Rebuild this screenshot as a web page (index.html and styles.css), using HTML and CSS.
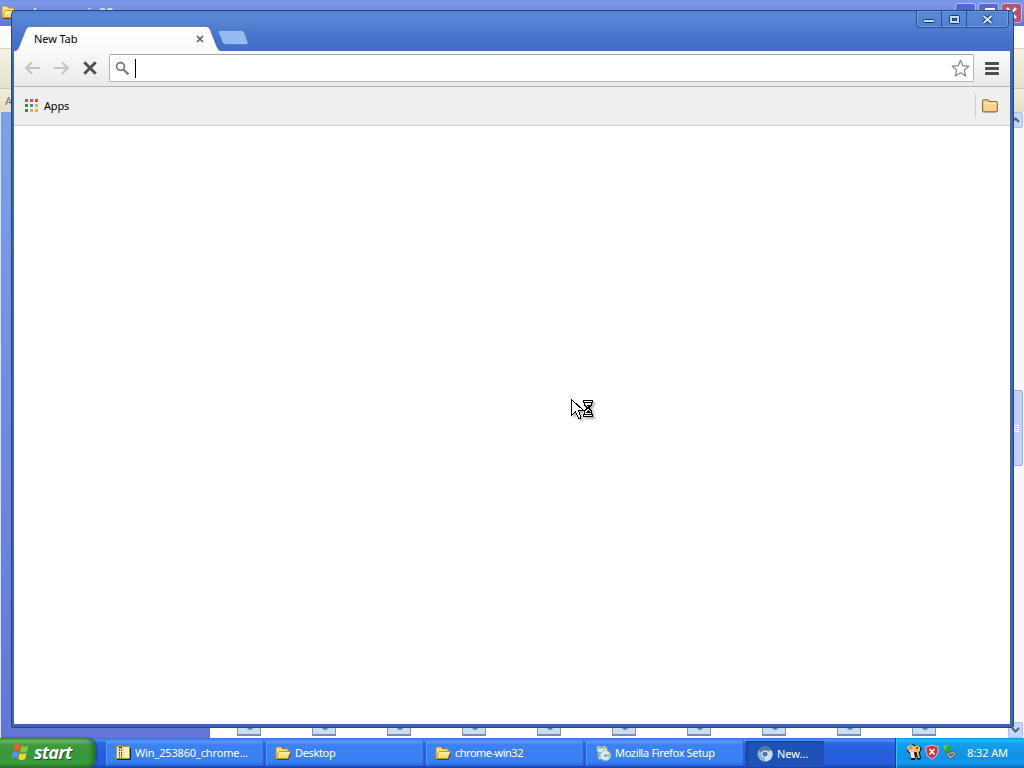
FILE: index.html
```
<!DOCTYPE html>
<html lang="en">
<head>
    <meta charset="UTF-8">
    <meta name="viewport" content="width=device-width, initial-scale=1.0">
    <title>New Tab</title>
    <link rel="stylesheet" href="styles.css">
</head>
<body>
    <svg class="defs" width="0" height="0">
        <defs>
            <linearGradient id="folder-fill" x1="0" y1="0" x2="0" y2="1">
                <stop offset="0" stop-color="#fffbb8"/>
                <stop offset="1" stop-color="#f6cf58"/>
            </linearGradient>
            <symbol id="xp-folder" viewBox="0 0 16 16">
                <path d="M1 13V3.5L2 2h4l1.500 2H13v3" fill="#fbe384" stroke="#b98d25"/>
                <path d="M1.500 13.500L4 6.500h11.500l-2.500 7z" fill="url(#folder-fill)" stroke="#c79a2c"/>
                <path d="M2 14.500h11.500l2-6" fill="none" stroke="#4b4431"/>
            </symbol>
        </defs>
    </svg>

    <div class="desktop">
        <!-- explorer window behind the browser -->
        <div class="explorer">
            <div class="explorer-title">
                <svg class="title-icon" width="16" height="16"><use href="#xp-folder"/></svg>
                <span class="title-text">chrome-win32</span>
                <div class="xp-buttons">
                    <span class="xp-btn"><svg width="20" height="20"><path d="M5 14h7" stroke="#fff" stroke-width="3"/></svg></span>
                    <span class="xp-btn"><svg width="20" height="20"><path d="M7 9V5h8v8h-3M4 9h8v7H4z" fill="none" stroke="#fff" stroke-width="2"/></svg></span>
                    <span class="xp-btn xp-close"><svg width="20" height="20"><path d="M5 4l9 10M14 4L5 14" stroke="#fff" stroke-width="2.4"/></svg></span>
                </div>
            </div>
            <div class="explorer-menu"></div>
            <div class="explorer-tools"></div>
            <div class="explorer-address">Address</div>
            <div class="explorer-body">
                <div class="side-pane"></div>
                <div class="files">
                    <i class="file"></i><i class="file"></i><i class="file"></i><i class="file"></i><i class="file"></i>
                    <i class="file"></i><i class="file"></i><i class="file"></i><i class="file"></i><i class="file"></i>
                </div>
                <div class="scrollbar">
                    <span class="scroll-btn"><svg width="15" height="15"><path d="M3 9l3.500-3.500L10 9" fill="none" stroke="#4d6185" stroke-width="2"/></svg></span>
                    <span class="scroll-thumb"><i></i><i></i><i></i><i></i></span>
                    <span class="scroll-btn"><svg width="15" height="15"><path d="M3 5l3.500 3.500L10 5" fill="none" stroke="#4d6185" stroke-width="2"/></svg></span>
                </div>
            </div>
        </div>

        <!-- browser window -->
        <div class="browser">
            <div class="window-buttons">
                <span class="win-btn win-min"><svg width="13" height="9"><rect x=".5" y="4.5" width="11" height="3" rx="1" fill="#c4dcfa" stroke="#1b3a70"/></svg></span>
                <span class="win-btn win-max"><svg width="13" height="11"><rect x="1.500" y="1.500" width="10" height="8" rx="1" fill="#c4dcfa" stroke="#1b3a70"/><rect x="4.500" y="4.500" width="4" height="2" fill="#4473c5" stroke="#1b3a70"/></svg></span>
                <span class="win-btn win-close"><svg width="13" height="11"><path d="M2.5 2l8 7M10.500 2l-8 7" stroke="#1b3a70" stroke-width="4"/><path d="M2.500 2l8 7M10.500 2l-8 7" stroke="#d0e4fc" stroke-width="2"/></svg></span>
            </div>
            <div class="tab-strip">
                <div class="tab">
                    <svg class="tab-shape" width="206" height="25">
                        <defs>
                            <linearGradient id="tab-fill" x1="0" y1="0" x2="0" y2="1">
                                <stop offset="0" stop-color="#fff"/>
                                <stop offset="1" stop-color="#fafafa"/>
                            </linearGradient>
                        </defs>
                        <path d="M0 25Q3 24 4 21L11 3Q12.500.5 15 .5H191Q194 .5 195 3L202 21Q203 24 206 25z" fill="url(#tab-fill)"/>
                        <path d="M0 24.500Q3 24 4 21L11 3Q12.500.5 15 .5H191Q194 .5 195 3L202 21Q203 24 206 24.500" fill="none" stroke="#2f569e" stroke-opacity=".55"/>
                    </svg>
                    <span class="tab-title">New Tab</span>
                    <svg class="tab-close" width="8" height="8"><path d="M1 1l6 6M7 1L1 7" stroke="#606060" stroke-width="1.7"/></svg>
                </div>
                <svg class="new-tab" width="32" height="16">
                    <path d="M3 .5H24.500Q26.500.5 27.500 2.500L31 12.500Q31.500 14.500 30 14.500H8.500Q6.500 14.500 5.500 12.500L1.500 2.500Q1 .5 3 .5z" fill="#94bcf2" stroke="#527fc8"/>
                </svg>
            </div>
            <div class="toolbar">
                <svg class="nav-icon" width="17" height="16"><path d="M16 8H3M8 2.200L2.200 8 8 13.800" fill="none" stroke="#c5c5c5" stroke-width="2.200"/></svg>
                <svg class="nav-icon" width="17" height="16"><path d="M1 8h13M9 2.200L14.800 8 9 13.800" fill="none" stroke="#c5c5c5" stroke-width="2.200"/></svg>
                <svg class="nav-icon" width="16" height="16"><path d="M2.300 2.300l11.400 11.400M13.700 2.300L2.300 13.700" stroke="#505050" stroke-width="3"/></svg>
                <div class="omnibox">
                    <svg class="search-icon" width="15" height="15"><circle cx="5.500" cy="5.500" r="3.900" fill="none" stroke="#777" stroke-width="1.700"/><path d="M8.500 8.500l5 5" stroke="#777" stroke-width="2.300"/></svg>
                    <span class="caret"></span>
                    <svg class="star" width="19" height="19"><path d="M9.500 1.200l2.300 5.500 6 .5-4.500 3.900 1.400 5.900-5.200-3.200L4.300 17l1.400-5.900L1.200 7.200l6-.5z" fill="#fff" stroke="#858585" stroke-width="1.200" stroke-linejoin="round"/></svg>
                </div>
                <div class="menu-icon"><i></i><i></i><i></i></div>
            </div>
            <div class="bookmarks">
                <div class="apps-grid">
                    <i class="red"></i><i class="red"></i><i class="red"></i>
                    <i class="green"></i><i class="blue"></i><i class="yellow"></i>
                    <i class="green"></i><i class="yellow"></i><i class="yellow"></i>
                </div>
                <span class="apps-label">Apps</span>
                <div class="other-bookmarks">
                    <svg width="16" height="14">
                        <path d="M.6 11.500V2Q.6.700 2 .700H5.500Q6.500.700 7 2.500H14Q15.300 2.500 15.300 4V11.500Q15.300 12.900 14 12.900H2Q.6 12.900.6 11.500z" fill="#fbd487" stroke="#81694a" stroke-width="1.100"/>
                        <path d="M1.500 4.200H14.500" stroke="#fff0c8"/>
                    </svg>
                </div>
            </div>
            <div class="page"></div>
        </div>

        <!-- busy pointer -->
        <svg class="cursor" width="26" height="22" shape-rendering="crispEdges">
            <path d="M.5.5V16.500L4.500 12.500L7.500 19.500H9.500V17.500L7.500 11.500H12.500z" fill="#fff" stroke="#000"/>
            <path d="M13.500 3v3l3 3-3 3v4h7v-4l-3-3 3-3V3z" fill="#fff" stroke="#000"/>
            <path d="M12.500 1.500h9v2h-9zM12.500 15.500h9v2h-9z" fill="#fff" stroke="#000"/>
            <path d="M16 6h3v1h-1v2h-1V7h-1zM17 11h1v1h1v1h1v1h-5v-1h1v-1h1z" fill="#000"/>
        </svg>

        <div class="taskbar">
            <div class="start">
                <svg class="flag" width="20" height="20">
                    <path d="M4.500 3Q7.500.8 10.500 3L9 9.200Q6 7.200 3 9.200z" fill="#ef5a2c"/>
                    <path d="M11.500 3.500Q15 5.500 18.500 3.500L17 9.700Q13.500 11.500 10 9.700z" fill="#82c63e"/>
                    <path d="M2.700 10.300Q5.700 8.300 8.700 10.300L7.200 16.500Q4.200 14.500 1.200 16.500z" fill="#5b92ee"/>
                    <path d="M9.700 10.900Q13.200 12.700 16.700 10.900L15.200 17.100Q11.700 19 8.200 17.100z" fill="#fbd133"/>
                </svg>
                <span class="start-text">start</span>
            </div>
            <div class="tasks">
                <div class="task">
                    <svg width="16" height="16"><rect x="1.500" y="1.500" width="13" height="12" fill="#f6e88c" stroke="#b39b45"/><path d="M9 3h5v9H9z" fill="#fff6b8"/><path d="M2 14.500h13.500V3" fill="none" stroke="#222"/><path d="M5.500 2v11" stroke="#333" stroke-width="3" stroke-dasharray="1.500 1"/><path d="M5.500 3v10" stroke="#ddd"/></svg>
                    <span class="task-zip">Win_253860_chrome...</span>
                </div>
                <div class="task">
                    <svg width="16" height="16"><use href="#xp-folder"/></svg>
                    <span class="task-desktop">Desktop</span>
                </div>
                <div class="task">
                    <svg width="16" height="16"><use href="#xp-folder"/></svg>
                    <span class="task-chrome">chrome-win32</span>
                </div>
                <div class="task">
                    <svg width="16" height="16"><path d="M1.500 2.500h11l-1 12h-8z" fill="#d4e8ee" stroke="#7093a9"/><path d="M2 1h4v3H2zM7 1h4v3H7z" fill="#9cc9a4"/><path d="M3 7h5v5H3z" fill="#88b6d6"/><circle cx="10.500" cy="10.500" r="5" fill="#e5e9ed" stroke="#b5c1cc"/><path d="M10.500 10.500l4-2a4 4 0 010 4z" fill="#8dcf7d"/><circle cx="10.500" cy="10.500" r="1.500" fill="#7ba0c6"/></svg>
                    <span class="task-firefox">Mozilla Firefox Setup</span>
                </div>
                <div class="task task-active">
                    <svg width="16" height="16"><circle cx="8" cy="8" r="7.500" fill="#8eb4dc"/><path d="M8 8L1.300 4.500A7.500 7.500 0 0114.700 4.500H8z" fill="#53789f"/><path d="M8 8l6.700-3.500A7.500 7.500 0 018 15.500z" fill="#cbdff2"/><circle cx="8" cy="8" r="3.600" fill="#e5f1fc"/><circle cx="8" cy="8" r="2.600" fill="#4778b3"/></svg>
                    <span class="task-new">New...</span>
                </div>
            </div>
            <div class="tray">
                <svg width="16" height="18"><path d="M3 3l4-2 3 2 4 0 2 3-2 3 1 7-3 1-2-5-1 5H5L4 11 1 8z" fill="#111"/><path d="M1 4L5 1.500 10 4 9 9 3 9z" fill="#f2c7a0"/><path d="M2 5l3-3 2 3-2 2z" fill="#d88e4a"/><path d="M4 9l4 0 1 6H5z" fill="#e9e9dc"/><circle cx="11" cy="6" r="3.300" fill="#f7c45a"/><path d="M11 7l2 8" stroke="#f3b548" stroke-width="2"/><circle cx="11" cy="5" r="1" fill="#3b2c15"/></svg>
                <svg width="14" height="16"><path d="M7 1Q9.500 2.500 13 2.500V8Q12.500 12.500 7 15.200 1.500 12.500 1 8V2.500Q4.500 2.500 7 1z" fill="#d32d3e" stroke="#e5bdcb"/><path d="M4.500 5l5 5.500M9.500 5l-5 5.500" stroke="#fff" stroke-width="1.800"/></svg>
                <svg width="16" height="16"><path d="M2 5L6 2l4 2-2 5-4 1z" fill="#33a23e"/><path d="M1 1h5L3 7z" fill="#58c94d"/><path d="M4 10l7-3 4 3-7 5z" fill="#b9c5c6" stroke="#415d66"/><path d="M6 10.500l5-2 2 1.500-5 3z" fill="#5c787b"/></svg>
                <span class="clock">8:32 AM</span>
            </div>
        </div>
    </div>
</body>
</html>
```
FILE: styles.css
```
* {
    box-sizing: border-box;
}

body {
    margin: 0;
    overflow: hidden;
    font-family: Tahoma, "Noto Sans", "Liberation Sans", sans-serif;
    font-size: 11px;
    color: #000;
}

svg {
    display: block;
    flex: none;
}

.defs {
    position: absolute;
}

.desktop {
    position: relative;
    width: 1024px;
    height: 768px;
    overflow: hidden;
    display: flex;
    flex-direction: column;
    background-color: #fff;
}

/* explorer window */
.explorer {
    height: 738px;
    display: flex;
    flex-direction: column;
}

.explorer-title {
    height: 26px;
    padding: 3px 2px 0 1px;
    display: flex;
    align-items: flex-start;
    background: linear-gradient(#7592e5 0, #7c97e9 3px, #738ce0 10px, #6674d6 26px);
}

.title-icon {
    margin-top: 1px;
}

.title-text {
    margin: 0 auto 0 9px;
    color: #dfe6fb;
    font-family: "Liberation Sans", sans-serif;
    font-size: 13px;
    font-weight: bold;
    line-height: 19px;
}

.xp-buttons {
    display: flex;
    gap: 2px;
}

.xp-btn {
    width: 21px;
    height: 20px;
    border: 1px solid #b4c1f2;
    border-radius: 3px;
    background-color: #5369cf;
}

.xp-close {
    background-color: #b65374;
}

.explorer-menu {
    height: 23px;
    background-color: #fdfdfa;
    border-bottom: 1px solid #d8d4bf;
}

.explorer-tools {
    height: 40px;
    background: linear-gradient(#f4f2e2, #e6e1c6);
    border-bottom: 1px solid #cfcab4;
}

.explorer-address {
    height: 23px;
    padding-left: 5px;
    line-height: 23px;
    color: #777;
    background: linear-gradient(#f0eedb, #e4dfc5);
}

.explorer-body {
    flex: 1;
    display: flex;
    border-left: 1px solid #d7e2fa;
}

.side-pane {
    width: 209px;
    background: linear-gradient(#7ba2e7, #6375d6);
}

.files {
    flex: 1;
    padding-left: 27px;
    display: flex;
    align-items: flex-end;
    gap: 51px;
}

.file {
    width: 24px;
    height: 32px;
    flex: none;
    margin-bottom: 2px;
    border: 1px solid #8492b7;
    border-bottom: 2px solid #7f8aac;
    background: radial-gradient(circle at 55% 75%, #5079b5 0, #5079b5 2px, transparent 4px), #cbdcf5;
}

.scrollbar {
    width: 17px;
    padding: 0 1px;
    display: flex;
    flex-direction: column;
    justify-content: space-between;
    background-color: #f7f8fb;
}

.scroll-btn {
    width: 15px;
    height: 16px;
    border: 1px solid #aebfea;
    border-radius: 2px;
    background-color: #c6d5fc;
}

.scroll-thumb {
    height: 76px;
    margin-top: 6px;
    display: flex;
    flex-direction: column;
    align-items: center;
    justify-content: center;
    gap: 1px;
    border: 1px solid #9fb2e2;
    border-radius: 2px;
    background-color: #c3d0fb;
}

.scroll-thumb i {
    width: 6px;
    height: 1px;
    background-color: #fff;
}

/* browser window */
.browser {
    position: absolute;
    left: 11px;
    top: 10px;
    width: 1003px;
    height: 718px;
    padding: 0 3px 3px 2px;
    display: flex;
    flex-direction: column;
    border: 1px solid #29457c;
    border-radius: 4px 4px 2px 2px;
    background: linear-gradient(#4e80ce 0, #5888d7 4px, #4671c9 30px, #3b65b1 60px, #3f65ad 100%);
}

.window-buttons {
    position: absolute;
    right: 4px;
    top: 0;
    height: 17px;
    display: flex;
    border: 1px solid #2c5298;
    border-top: none;
    border-radius: 0 0 4px 4px;
    box-shadow: inset 0 0 0 1px #6f9be0;
}

.win-btn {
    display: flex;
    align-items: center;
    justify-content: center;
    border-right: 1px solid #2c5298;
}

.win-min {
    width: 25px;
}

.win-max {
    width: 25px;
}

.win-close {
    width: 41px;
    border-right: none;
}

.tab-strip {
    height: 40px;
    padding: 15px 0 0 1px;
    display: flex;
    align-items: flex-start;
}

.tab {
    position: relative;
    width: 206px;
    height: 25px;
    padding: 0 17px 0 19px;
    display: flex;
    align-items: center;
    justify-content: space-between;
}

.tab-shape {
    position: absolute;
    left: 0;
    top: 0;
}

.tab-title {
    position: relative;
    font-size: 11px;
    letter-spacing: -0.1px;
}

.tab-close {
    position: relative;
}

.new-tab {
    margin: 4px 0 0 -4px;
}

.toolbar {
    height: 36px;
    padding: 3px 11px 0 10px;
    display: flex;
    align-items: flex-start;
    background: linear-gradient(#fafafa, #eaeaea);
    border-bottom: 1px solid #b2b2b2;
}

.nav-icon {
    margin: 6px 12px 0 0;
}

.omnibox {
    flex: 1;
    height: 28px;
    margin: 0 11px 0 -1px;
    padding: 0 3px 0 5px;
    display: flex;
    align-items: center;
    border: 1px solid #b4b4b4;
    border-top-color: #a3a3a3;
    border-radius: 2px;
    background-color: #fff;
}

.caret {
    width: 1px;
    height: 19px;
    margin: 0 auto 0 5px;
    background-color: #000;
}

.menu-icon {
    width: 14px;
    margin-top: 8px;
    display: flex;
    flex-direction: column;
    gap: 2px;
}

.menu-icon i {
    height: 3px;
    border-radius: 1px;
    background-color: #4d4d4d;
}

.bookmarks {
    height: 39px;
    padding: 0 12px 1px 11px;
    display: flex;
    align-items: center;
    background-color: #efefef;
    border-bottom: 1px solid #d2d2d2;
}

.apps-grid {
    display: grid;
    grid-template-columns: repeat(3, 3px);
    grid-auto-rows: 3px;
    gap: 2px;
}

.red {
    background-color: #d84a4c;
}

.green {
    background-color: #3b8a50;
}

.blue {
    background-color: #4484dc;
}

.yellow {
    background-color: #e4b238;
}

.apps-label {
    margin: 0 auto 0 6px;
    letter-spacing: -0.2px;
}

.other-bookmarks {
    height: 24px;
    padding-left: 6px;
    display: flex;
    align-items: center;
    border-left: 1px solid #d2d2d2;
}

.page {
    flex: 1;
    background-color: #fff;
}

.cursor {
    position: absolute;
    left: 571px;
    top: 399px;
    filter: drop-shadow(2px 2px 1px rgba(0, 0, 0, 0.3));
}

/* taskbar */
.taskbar {
    height: 30px;
    display: flex;
    color: #fff;
    background: linear-gradient(#3168d5 0, #4e91f2 2px, #2b68e2 5px, #245edb 15px, #255cda 26px, #1941a5 30px);
}

.start {
    width: 96px;
    padding: 0 0 2px 10px;
    display: flex;
    align-items: center;
    gap: 4px;
    border-radius: 0 9px 9px 0;
    background: linear-gradient(#3c8c3c 0, #6cb56a 3px, #3e9a3d 7px, #379838 20px, #3a9d3b 25px, #26702a 30px);
    box-shadow: inset -5px 0 5px -2px #23662a, 1px 0 2px #1a429c;
}

.start-text {
    font-family: "Open Sans", "Liberation Sans", sans-serif;
    font-size: 18px;
    font-style: italic;
    font-weight: bold;
    line-height: 28px;
    letter-spacing: -0.8px;
    text-shadow: 1px 1px 1px #1d4f20;
}

.tasks {
    flex: 1;
    padding: 3px 0 2px 10px;
    display: flex;
    gap: 2px;
}

.task {
    width: 158px;
    padding: 0 0 2px 9px;
    display: flex;
    align-items: center;
    gap: 4px;
    border-radius: 2px;
    background: linear-gradient(#5b9bfc 0, #3c81f3 4px, #3980f5 21px, #2863d4 25px);
    box-shadow: inset 1px 0 #5d99fa, inset -1px 0 #2860cf;
    white-space: nowrap;
}

.task-zip {
    letter-spacing: -0.15px;
}

.task-desktop,
.task-firefox {
    letter-spacing: -0.35px;
}

.task-chrome {
    letter-spacing: -0.5px;
}

.task-active {
    width: 78px;
    padding: 0 0 0 11px;
    background: #1e52b7;
    box-shadow: inset 1px 1px 2px #153c8c;
}

.tray {
    width: 129px;
    padding: 0 0 2px 10px;
    display: flex;
    align-items: center;
    gap: 3px;
    border-left: 1px solid #123f9c;
    background: linear-gradient(#0d8dea 0, #1fbdf8 2px, #159ded 6px, #1290e8 20px, #159aec 25px, #0c68bb 30px);
    box-shadow: inset 1px 0 #36c3f5;
}

.clock {
    margin-left: 6px;
    letter-spacing: -0.1px;
    white-space: nowrap;
}
```
